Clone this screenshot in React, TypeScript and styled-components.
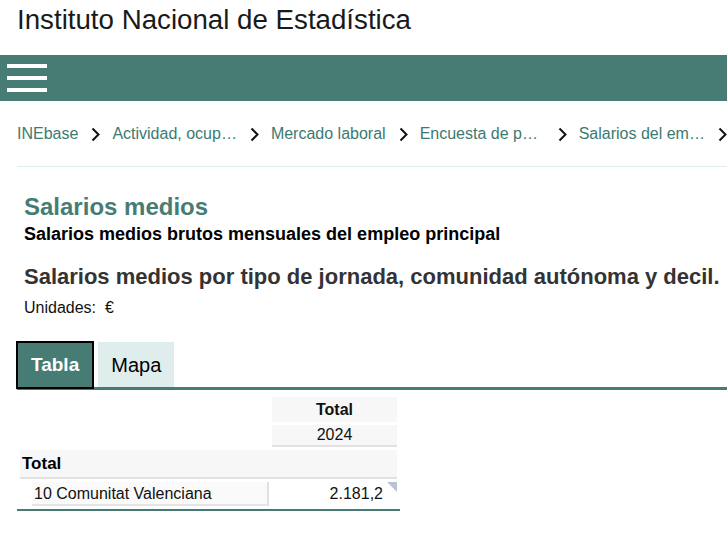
import React from "react";
import styled, { createGlobalStyle } from "styled-components";

const GlobalStyle = createGlobalStyle`
  body {
    margin: 0;
    background: #ffffff;
    font-family: "Liberation Sans", Arial, sans-serif;
    color: #000;
  }
`;

const SiteTitle = styled.header`
  height: 55px;
  padding: 5px 0 0 17px;
  box-sizing: border-box;
  font-family: "Liberation Sans", Arial, sans-serif;
  font-size: 27.7px;
  line-height: 30px;
  font-weight: 400;
  color: #1a1a1a;
`;

const NavBar = styled.nav`
  height: 46px;
  background: #477c74;
  display: flex;
  align-items: center;
  padding-left: 7px;
`;

const Burger = styled.button`
  width: 40px;
  height: 28px;
  padding: 0;
  border: 0;
  background: transparent;
  display: flex;
  flex-direction: column;
  justify-content: space-between;
  cursor: pointer;

  span {
    display: block;
    height: 4px;
    background: #ffffff;
  }
`;

const Crumbs = styled.ol`
  list-style: none;
  margin: 0 0 0 17px;
  padding: 23px 0 22px;
  display: flex;
  align-items: center;
  gap: 12px;
  white-space: nowrap;
  overflow: hidden;
  border-bottom: 1px solid #dcefec;
  font-size: 16px;
  line-height: 20px;
  color: #3c7a71;
`;

const Crumb = styled.li<{ $w?: number }>`
  display: flex;
  align-items: center;
  gap: 13px;
  flex-shrink: 0;

  a {
    color: inherit;
    text-decoration: none;
    ${(p) => (p.$w ? `width: ${p.$w}px;` : "")}
  }
`;

const Chevron = () => (
  <svg width="9" height="15" viewBox="0 0 9 15" aria-hidden>
    <path d="M1.5 1.5 L7.5 7.5 L1.5 13.5" fill="none" stroke="#111" strokeWidth="2" />
  </svg>
);

const Main = styled.main`
  padding: 0 0 0 24px;
`;

const PageTitle = styled.h1`
  margin: 26px 0 0;
  font-size: 24px;
  line-height: 28px;
  font-weight: 700;
  color: #477c74;
`;

const SubTitle = styled.h2`
  margin: 2px 0 0;
  font-size: 18px;
  line-height: 22px;
  font-weight: 700;
  color: #000;
`;

const TableTitle = styled.h3`
  margin: 19px 0 0;
  font-size: 22px;
  line-height: 26px;
  font-weight: 700;
  color: #333;
  white-space: nowrap;
`;

const Units = styled.p`
  margin: 8px 0 0;
  font-size: 16px;
  line-height: 19px;
  color: #111;
`;

const TabList = styled.div`
  margin: 24px 0 0 -7px;
  display: flex;
  align-items: flex-end;
  gap: 4px;
  border-bottom: 3px solid #477c74;
`;

const Tab = styled.button<{ $active?: boolean }>`
  font-family: "Liberation Sans", Arial, sans-serif;
  line-height: 24px;
  padding: 0 13px;
  cursor: pointer;
  ${(p) =>
    p.$active
      ? `
    margin-left: -1px;
    height: 48px;
    background: #477c74;
    color: #fff;
    font-size: 19px;
    font-weight: 700;
    border: 2px solid #000;
    margin-bottom: -2px;
  `
      : `
    height: 45px;
    background: #dfeeed;
    color: #000;
    font-size: 20px;
    font-weight: 400;
    border: 0;
  `}
`;

const Data = styled.table`
  margin: 4px 0 0 -7px;
  border-collapse: separate;
  border-spacing: 3px;
  border-bottom: 2px solid #477c74;
  font-size: 16px;
`;

const Corner = styled.td``;

const ColHead = styled.th<{ $bold?: boolean }>`
  width: 125px;
  box-sizing: border-box;
  background: #f7f7f7;
  text-align: center;
  font-weight: ${(p) => (p.$bold ? 700 : 400)};
  height: ${(p) => (p.$bold ? 25 : 22)}px;
  padding: 0;
  color: #111;
  border-bottom: ${(p) => (p.$bold ? "0" : "2px solid #e2e2e2")};
`;

const GroupRow = styled.th`
  height: 29px;
  padding: 0 0 0 2px;
  box-sizing: border-box;
  background: #f7f7f7;
  border-bottom: 2px solid #e2e2e2;
  text-align: left;
  font-size: 17px;
  font-weight: 700;
`;

const RowLabel = styled.th`
  width: 249px;
  padding: 0;
  text-align: left;
  font-weight: 400;

  span {
    display: block;
    margin-left: 12px;
    height: 24px;
    line-height: 24px;
    padding-left: 2px;
    background: #fafafa;
    border-right: 2px solid #e0e0e0;
    border-bottom: 2px solid #e6e6e6;
    box-sizing: border-box;
    font-size: 16px;
    color: #111;
  }
`;

const Value = styled.td`
  position: relative;
  height: 24px;
  padding: 0 14px 0 0;
  text-align: right;
  font-size: 16px;
  color: #111;

  &::after {
    content: "";
    position: absolute;
    top: 0;
    right: 0;
    border-style: solid;
    border-width: 0 10px 10px 0;
    border-color: transparent #b9c3d3 transparent transparent;
  }
`;

const crumbs: { label: string; w?: number }[] = [
  { label: "INEbase" },
  { label: "Actividad, ocup…" },
  { label: "Mercado laboral" },
  { label: "Encuesta de p…", w: 125 },
  { label: "Salarios del em…" },
];

export default function App() {
  return (
    <>
      <GlobalStyle />
      <SiteTitle>Instituto Nacional de Estadística</SiteTitle>
      <NavBar>
        <Burger aria-label="Menú">
          <span />
          <span />
          <span />
        </Burger>
      </NavBar>
      <Crumbs>
        {crumbs.map((c) => (
          <Crumb key={c.label} $w={c.w}>
            <a href="#">{c.label}</a>
            <Chevron />
          </Crumb>
        ))}
      </Crumbs>
      <Main>
        <PageTitle>Salarios medios</PageTitle>
        <SubTitle>Salarios medios brutos mensuales del empleo principal</SubTitle>
        <TableTitle>Salarios medios por tipo de jornada, comunidad autónoma y decil.</TableTitle>
        <Units>Unidades:&nbsp; €</Units>
        <TabList>
          <Tab $active>Tabla</Tab>
          <Tab>Mapa</Tab>
        </TabList>
        <Data>
          <thead>
            <tr>
              <Corner />
              <ColHead $bold>Total</ColHead>
            </tr>
            <tr>
              <Corner />
              <ColHead>2024</ColHead>
            </tr>
          </thead>
          <tbody>
            <tr>
              <GroupRow colSpan={2}>Total</GroupRow>
            </tr>
            <tr>
              <RowLabel>
                <span>10 Comunitat Valenciana</span>
              </RowLabel>
              <Value>2.181,2</Value>
            </tr>
          </tbody>
        </Data>
      </Main>
    </>
  );
}
